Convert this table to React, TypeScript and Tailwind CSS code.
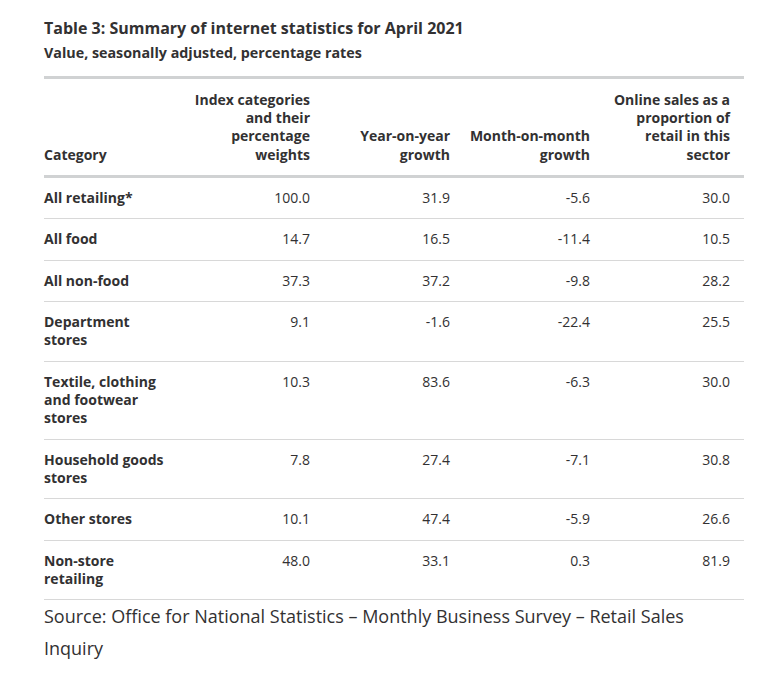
const ROWS: [string, string, string, string, string][] = [
  ['All retailing*', '100.0', '31.9', '-5.6', '30.0'],
  ['All food', '14.7', '16.5', '-11.4', '10.5'],
  ['All non-food', '37.3', '37.2', '-9.8', '28.2'],
  ['Department stores', '9.1', '-1.6', '-22.4', '25.5'],
  ['Textile, clothing and footwear stores', '10.3', '83.6', '-6.3', '30.0'],
  ['Household goods stores', '7.8', '27.4', '-7.1', '30.8'],
  ['Other stores', '10.1', '47.4', '-5.9', '26.6'],
  ['Non-store retailing', '48.0', '33.1', '0.3', '81.9'],
];

const HEADERS = [
  'Index categories and their percentage weights',
  'Year-on-year growth',
  'Month-on-month growth',
  'Online sales as a proportion of retail in this sector',
];

export default function App() {
  return (
    <div className="min-h-screen bg-white font-['Open_Sans',sans-serif] text-[#323132]">
      <div className="px-[44px] pt-[17px]">
        <h2 className="text-[16px] font-bold leading-[22px]">Table 3: Summary of internet statistics for April 2021</h2>
        <h3 className="mt-[4px] text-[14.3px] font-bold leading-[20px]">Value, seasonally adjusted, percentage rates</h3>

        <table className="mt-[13px] w-[700px] table-fixed border-collapse border-t-[3px] border-[#d0d2d3] text-[14px] leading-[1.3]">
          <thead>
            <tr className="border-b-[3px] border-[#d0d2d3]">
              <th className="w-[140px] pb-[11px] pr-[14px] pt-[12px] text-left align-bottom font-bold">Category</th>
              {HEADERS.map((h) => (
                <th key={h} className="w-[140px] pb-[11px] pr-[14px] pt-[12px] text-right align-bottom font-bold">
                  {h}
                </th>
              ))}
            </tr>
          </thead>
          <tbody>
            {ROWS.map((r) => (
              <tr key={r[0]} className="border-b border-[#d8d8d8]">
                <td className="py-[11.15px] pr-[14px] align-top font-bold">{r[0]}</td>
                {r.slice(1).map((v, i) => (
                  <td key={i} className="py-[11.15px] pr-[14px] text-right align-top">
                    {v}
                  </td>
                ))}
              </tr>
            ))}
          </tbody>
        </table>

        <p className="w-[700px] text-[18px] leading-[32px]">
          Source: Office for National Statistics – Monthly Business Survey – Retail Sales Inquiry
        </p>
      </div>
    </div>
  );
}
